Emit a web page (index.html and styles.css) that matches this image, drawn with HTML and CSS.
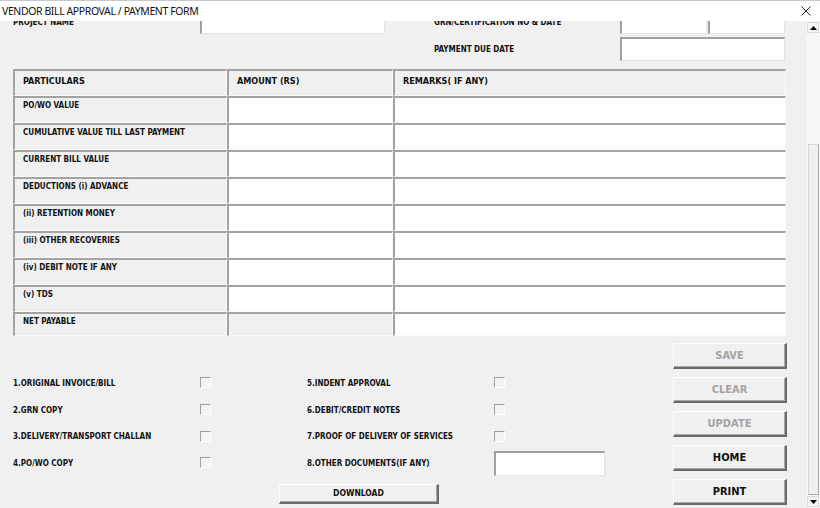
FILE: index.html
```html
<!DOCTYPE html>
<html>
<head>
<meta charset="utf-8">
<link rel="stylesheet" href="styles.css">
</head>
<body>
<div class="window">
  <div class="titlebar">
    <span class="title">VENDOR BILL APPROVAL / PAYMENT FORM</span>
    <svg class="close" width="10" height="10" viewBox="0 0 10 10"><path d="M0.5 0.5 L9.5 9.5 M9.5 0.5 L0.5 9.5" stroke="#222" stroke-width="1" fill="none"/></svg>
  </div>
  <div class="client">
    <div class="viewport">
      <div class="form">
        <div class="topfields">
          <div class="lbl">PROJECT NAME</div>
          <div class="tbox"></div>
          <div></div>
          <div class="lbl">GRN/CERTIFICATION NO &amp; DATE</div>
          <div class="tpair"><div class="tbox"></div><div class="tbox"></div></div>
          <div></div><div></div><div></div>
          <div class="lbl">PAYMENT DUE DATE</div>
          <div class="tbox"></div>
        </div>

        <div class="table">
          <div class="cell head">PARTICULARS</div>
          <div class="cell head">AMOUNT (RS)</div>
          <div class="cell head">REMARKS( IF ANY)</div>

          <div class="cell lab">PO/WO VALUE</div><div class="cell in"></div><div class="cell in"></div>
          <div class="cell lab">CUMULATIVE VALUE TILL LAST PAYMENT</div><div class="cell in"></div><div class="cell in"></div>
          <div class="cell lab">CURRENT BILL VALUE</div><div class="cell in"></div><div class="cell in"></div>
          <div class="cell lab">DEDUCTIONS (i) ADVANCE</div><div class="cell in"></div><div class="cell in"></div>
          <div class="cell lab">(ii) RETENTION MONEY</div><div class="cell in"></div><div class="cell in"></div>
          <div class="cell lab">(iii) OTHER RECOVERIES</div><div class="cell in"></div><div class="cell in"></div>
          <div class="cell lab">(iv) DEBIT NOTE IF ANY</div><div class="cell in"></div><div class="cell in"></div>
          <div class="cell lab">(v) TDS</div><div class="cell in"></div><div class="cell in"></div>
          <div class="cell lab">NET PAYABLE</div><div class="cell lab"></div><div class="cell in"></div>
        </div>

        <div class="lower">
          <div class="docs">
            <div class="docgrid">
              <div class="dlbl">1.ORIGINAL INVOICE/BILL</div><div class="cb"></div>
              <div class="dlbl">5.INDENT APPROVAL</div><div class="cb"></div>
              <div class="dlbl">2.GRN COPY</div><div class="cb"></div>
              <div class="dlbl">6.DEBIT/CREDIT NOTES</div><div class="cb"></div>
              <div class="dlbl">3.DELIVERY/TRANSPORT CHALLAN</div><div class="cb"></div>
              <div class="dlbl">7.PROOF OF DELIVERY OF SERVICES</div><div class="cb"></div>
              <div class="dlbl">4.PO/WO COPY</div><div class="cb"></div>
              <div class="dlbl">8.OTHER DOCUMENTS(IF ANY)</div><div class="tbox other"></div>
            </div>
            <div class="btn download">DOWNLOAD</div>
          </div>
          <div class="actions">
            <div class="btn act disabled">SAVE</div>
            <div class="btn act disabled">CLEAR</div>
            <div class="btn act disabled">UPDATE</div>
            <div class="btn act">HOME</div>
            <div class="btn act">PRINT</div>
          </div>
        </div>
      </div>
    </div>
    <div class="scrollbar">
      <div class="arrow up"><svg width="7" height="4" viewBox="0 0 7 4"><path d="M0 4 L3.5 0 L7 4 Z" fill="#000"/></svg></div>
      <div class="track"></div>
      <div class="thumb"></div>
      <div class="arrow down"><svg width="7" height="4" viewBox="0 0 7 4"><path d="M0 0 L3.5 4 L7 0 Z" fill="#000"/></svg></div>
    </div>
  </div>
</div>
</body>
</html>
```
FILE: styles.css
```css
html, body {
  margin: 0;
  padding: 0;
  background: #f0f0f0;
}
.window {
  width: 820px;
  height: 508px;
  display: flex;
  flex-direction: column;
  overflow: hidden;
  font-family: "DejaVu Sans Condensed", "DejaVu Sans", sans-serif;
  color: #111;
}
.titlebar {
  height: 21px;
  flex: none;
  background: #fff;
  border-top: 1px solid #c8c8c8;
  box-sizing: border-box;
  display: flex;
  align-items: center;
  justify-content: space-between;
  padding: 0 9px 0 2px;
}
.title {
  font-family: "Noto Sans", "Open Sans", sans-serif;
  font-size: 10.5px;
  color: #111;
  letter-spacing: -0.4px;
}
.close {
  display: block;
}
.client {
  flex: 1;
  display: flex;
  min-height: 0;
}
.viewport {
  width: 805px;
  overflow: hidden;
  flex: none;
}
.form {
  margin-top: -11px;
  padding-left: 13px;
}
.topfields {
  display: grid;
  grid-template-columns: 187px 185px 49px 186px 165px;
  grid-template-rows: 24px 24px;
  row-gap: 3px;
  align-items: center;
}
.lbl {
  font-weight: bold;
  font-size: 8px;
}
.tbox {
  height: 24px;
  box-sizing: border-box;
  background: #fff;
  border-top: 2px solid #a0a0a0;
  border-left: 2px solid #a0a0a0;
  border-right: 1px solid #e3e3e3;
  border-bottom: 1px solid #e3e3e3;
}
.tpair {
  display: flex;
  gap: 1px;
}
.tpair .tbox:first-child { width: 87px; }
.tpair .tbox:last-child { flex: 1; }

.table {
  margin-top: 8px;
  display: grid;
  grid-template-columns: 214px 166px 393px;
  grid-template-rows: repeat(9, 27px) 24px;
}
.cell {
  box-sizing: border-box;
  border-top: 2px solid #a3a3a3;
  border-left: 2px solid #a3a3a3;
  border-right: 1px solid #fafafa;
  border-bottom: 1px solid #fafafa;
  background: #f0f0f0;
  font-weight: bold;
  white-space: nowrap;
}
.cell.head {
  font-size: 9px;
  line-height: 11px;
  padding: 5px 0 0 8px;
}
.cell.lab {
  font-size: 8px;
  line-height: 10px;
  padding: 3px 0 0 8px;
}
.cell.in {
  background: #fff;
}

.lower {
  display: flex;
}
.docs {
  width: 660px;
  flex: none;
}
.docgrid {
  margin-top: 34px;
  display: grid;
  grid-template-columns: 187px 107px 187px 120px;
  grid-auto-rows: 26.7px;
  align-items: center;
}
.dlbl {
  font-weight: bold;
  font-size: 8px;
}
.cb {
  width: 11px;
  height: 11px;
  box-sizing: border-box;
  border-top: 1px solid #a0a0a0;
  border-left: 1px solid #a0a0a0;
  border-right: 1px solid #fdfdfd;
  border-bottom: 1px solid #fdfdfd;
  background: #f3f3f3;
  margin-top: -1px;
}
.tbox.other {
  width: 111px;
  height: 25px;
}
.btn {
  box-sizing: border-box;
  background: #f0f0f0;
  border-top: 1px solid #fcfcfc;
  border-left: 1px solid #fcfcfc;
  border-right: 2px solid #6b6b6b;
  border-bottom: 2px solid #6b6b6b;
  box-shadow: inset -1px -1px 0 #a8a8a8;
  display: flex;
  align-items: center;
  justify-content: center;
  font-weight: bold;
  color: #111;
}
.download {
  margin: 7px 0 0 266px;
  width: 160px;
  height: 20px;
  font-size: 8.5px;
}
.actions {
  width: 114px;
  padding-top: 7px;
  display: flex;
  flex-direction: column;
  gap: 8px;
}
.act {
  height: 26px;
  font-size: 11px;
  font-family: "DejaVu Sans", sans-serif;
  font-stretch: condensed;
}
.act.disabled {
  color: #a3a3a3;
}

.scrollbar {
  width: 15px;
  flex: none;
  background: #f7f7f7;
  border-left: 1px solid #ececec;
  box-sizing: border-box;
  display: flex;
  flex-direction: column;
  padding: 1px;
}
.arrow {
  height: 11px;
  flex: none;
  box-sizing: border-box;
  border: 1px solid #dadada;
  background: #f4f4f4;
  display: flex;
  align-items: center;
  justify-content: center;
}
.track {
  height: 111px;
  flex: none;
}
.thumb {
  flex: 1;
  box-sizing: border-box;
  border-left: 1px solid #d6d6d6;
  border-top: 1px solid #d6d6d6;
  border-right: 1px solid #a8a8a8;
  border-bottom: 1px solid #a8a8a8;
  background: #f0f0f0;
  margin: 0 0 1px 1px;
}
```
